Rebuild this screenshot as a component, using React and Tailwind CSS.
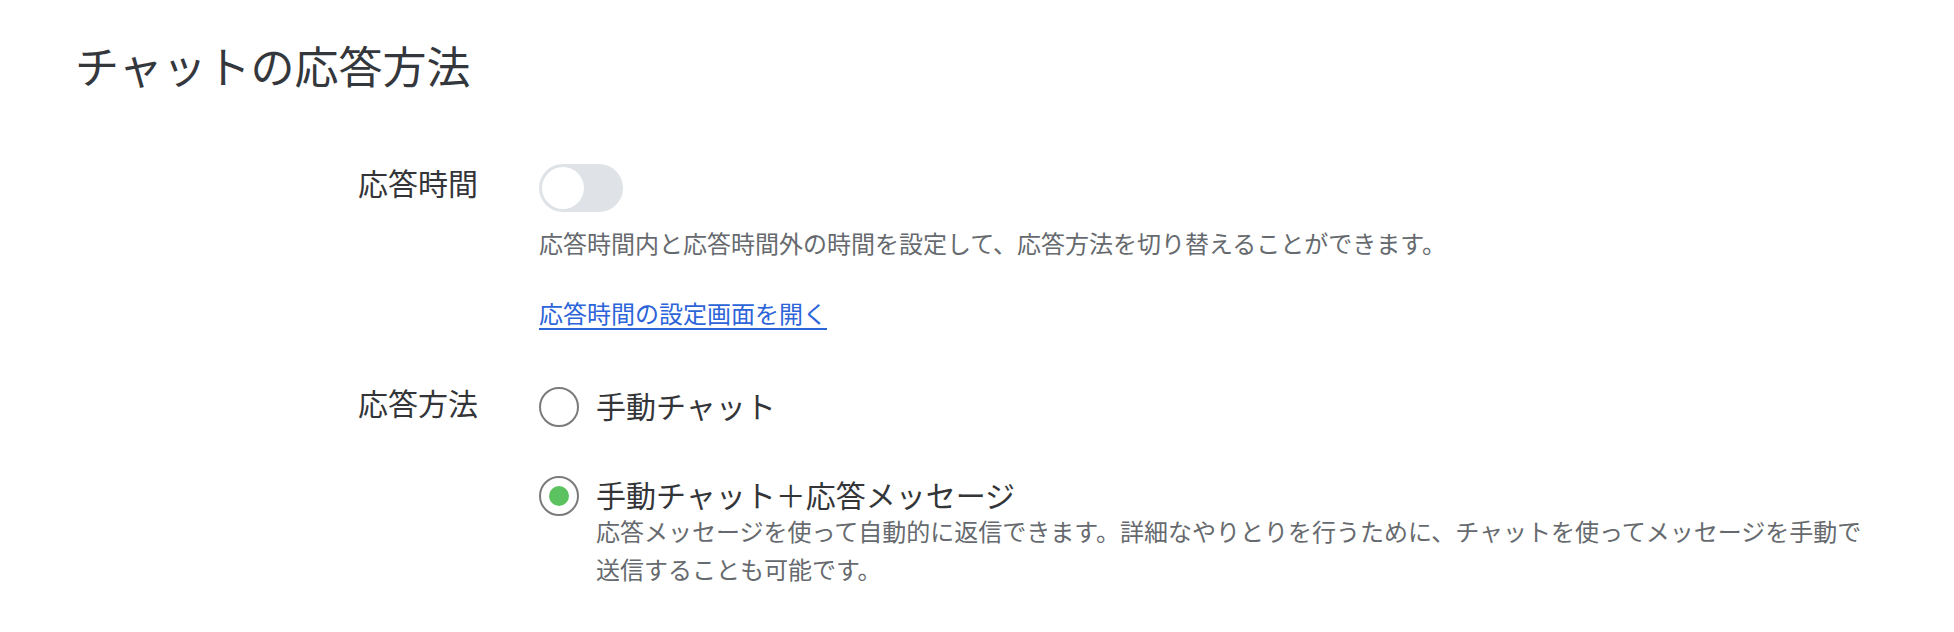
import React, { useState } from 'react';

const font = { fontFamily: '"Noto Sans CJK JP", "Noto Sans", sans-serif' };

function Toggle({ on, onChange }) {
    return (
        <button
            type="button"
            onClick={() => onChange?.(!on)}
            className={`relative h-[48px] w-[84px] rounded-full ${on ? 'bg-[#5cc15f]' : 'bg-[#dfe2e6]'}`}
        >
            <span
                className={`absolute top-[3px] h-[42px] w-[42px] rounded-full bg-white ${on ? 'left-[39px]' : 'left-[3px]'}`}
            />
        </button>
    );
}

function Radio({ checked, onClick, label }) {
    return (
        <button type="button" onClick={onClick} className="flex h-[40px] items-center gap-[17px] text-left">
            <span className="flex h-[40px] w-[40px] shrink-0 items-center justify-center rounded-full border-2 border-[#7b7b7b] bg-white">
                {checked && <span className="h-[20px] w-[20px] rounded-full bg-[#5cc15f]" />}
            </span>
            <span className="-mt-[5px] text-[30px] leading-[40px] text-[#333538]">{label}</span>
        </button>
    );
}

export default function App() {
    const [hoursOn, setHoursOn] = useState(false);
    const [method, setMethod] = useState('manual-auto');

    return (
        <div className="min-h-[632px] bg-white pl-[75px] pr-[75px] pt-[32px]" style={font}>
            {/* Title */}
            <h1 className="text-[44px] leading-[66px] font-normal text-[#34373c]">チャットの応答方法</h1>

            <div className="mt-[66px] grid grid-cols-[403px_1fr] gap-x-[61px]">
                {/* 応答時間 */}
                <div className="-mt-[4px] text-right text-[30px] leading-[44px] text-[#333538]">応答時間</div>
                <div>
                    <Toggle on={hoursOn} onChange={setHoursOn} />
                    <p className="mt-[7px] text-[24px] leading-[38px] text-[#666a6e]">
                        応答時間内と応答時間外の時間を設定して、応答方法を切り替えることができます。
                    </p>
                    <a href="#" className="mt-[32px] inline-block text-[24px] leading-[38px] text-[#2c64d9] underline underline-offset-[5px]">
                        応答時間の設定画面を開く
                    </a>
                </div>

                {/* 応答方法 */}
                <div className="mt-[50px] text-right text-[30px] leading-[40px] text-[#333538]">応答方法</div>
                <div className="mt-[55px] flex flex-col">
                    <Radio label="手動チャット" checked={method === 'manual'} onClick={() => setMethod('manual')} />
                    <div className="mt-[49px]">
                        <Radio
                            label="手動チャット＋応答メッセージ"
                            checked={method === 'manual-auto'}
                            onClick={() => setMethod('manual-auto')}
                        />
                        <p className="-mt-[4px] pl-[57px] text-[24px] leading-[38px] text-[#666a6e]">
                            応答メッセージを使って自動的に返信できます。詳細なやりとりを行うために、チャットを使ってメッセージを手動で送信することも可能です。
                        </p>
                    </div>
                </div>
            </div>
        </div>
    );
}
